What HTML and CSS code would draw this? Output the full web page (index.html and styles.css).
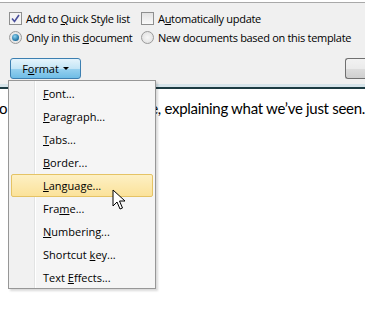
FILE: index.html
```html
<!DOCTYPE html>
<html>
<head>
<meta charset="utf-8">
<link rel="stylesheet" href="styles.css">
</head>
<body>
<div class="screen">
  <div class="dialog">
    <div class="preview"></div>
    <div class="opt-row first">
      <label class="opt col1"><span class="check checked"><svg width="9" height="9" viewBox="0 0 9 9"><path d="M1 4.5 L3.5 7.5 L8 1" fill="none" stroke="#4a4f9c" stroke-width="1.6"/></svg></span><span class="lbl">Add to <u>Q</u>uick Style list</span></label>
      <label class="opt"><span class="check"></span><span class="lbl">A<u>u</u>tomatically update</span></label>
    </div>
    <div class="opt-row">
      <label class="opt col1"><span class="radio on"></span><span class="lbl">Only in this <u>d</u>ocument</span></label>
      <label class="opt"><span class="radio"></span><span class="lbl">New documents based on this template</span></label>
    </div>
    <div class="btn-row">
      <button class="format-btn"><span>F<u>o</u>rmat</span><span class="caret"></span></button>
      <span class="ok-btn"></span>
    </div>
  </div>
  <div class="doc">
    <p class="doc-line"><span class="lead">o</span><span class="rest">e, explaining what we’ve just seen.</span></p>
  </div>
  <ul class="menu">
    <li><u>F</u>ont...</li>
    <li><u>P</u>aragraph...</li>
    <li><u>T</u>abs...</li>
    <li><u>B</u>order...</li>
    <li class="hot"><u>L</u>anguage...</li>
    <li>Fra<u>m</u>e...</li>
    <li><u>N</u>umbering...</li>
    <li>Shortcut <u>k</u>ey...</li>
    <li>Text <u>E</u>ffects...</li>
  </ul>
  <svg class="cursor" width="14" height="22" viewBox="0 0 14 22"><path d="M1 1 L1 17 L5 13 L8 20 L10.5 19 L7.5 12 L13 12 Z" fill="#fff" stroke="#000" stroke-width="1" stroke-linejoin="round"/></svg>
</div>
</body>
</html>
```
FILE: styles.css
```css
* { box-sizing: border-box; }
body { margin: 0; background: #fff; }
.screen {
  position: relative;
  width: 365px;
  height: 316px;
  overflow: hidden;
  font-family: "Open Sans", "Noto Sans", sans-serif;
  font-size: 11px;
  color: #000;
}
u { text-decoration: underline; text-underline-offset: 1px; }
.dialog {
  background: #f0f0f0;
  height: 89px;
  padding: 0 0 0 9px;
  border-bottom: 2px solid #1c3b42;
  box-shadow: inset 0 -3px 0 #d6e4ea;
}
.preview {
  height: 3px;
  margin-left: -9px;
  border-bottom: 1px solid #a9a9a9;
  background: #fff;
}
.opt-row {
  display: flex;
  height: 19px;
  align-items: center;
}
.opt-row.first { margin-top: 6px; }
.opt { display: flex; align-items: center; gap: 4px; white-space: nowrap; letter-spacing: -0.3px; }
.col1 { width: 132px; }
.check {
  flex-shrink: 0;
  width: 13px; height: 13px;
  border: 1px solid #8e8f8f;
  background: linear-gradient(#e2e2e2, #fafafa);
  display: flex; align-items: center; justify-content: center;
}
.check.checked { background: #f4f4f4; }
.radio {
  flex-shrink: 0;
  width: 13px; height: 13px; border-radius: 50%;
  border: 1px solid #9a9a9a;
  background: radial-gradient(circle at 50% 50%, #f7f7f7, #dcdcdc);
  position: relative;
}
.radio.on::after {
  content: ""; position: absolute; left: 2px; top: 2px; width: 7px; height: 7px; border-radius: 50%;
  background: radial-gradient(circle at 40% 35%, #8fd3f0, #1b6fa0 70%, #0c3f66);
}
.btn-row {
  display: flex;
  justify-content: space-between;
  margin-top: 11px;
  padding-left: 1px;
}
.format-btn {
  width: 71px; height: 21px;
  border: 1px solid #3c7fb1;
  border-radius: 3px;
  background: linear-gradient(#e5f4fc 0%, #c4e5f6 50%, #98d1ef 51%, #6fbde6 100%);
  font: inherit;
  padding: 0 0 1px 0;
  display: flex; align-items: center; justify-content: center; gap: 4px;
  color: #000;
  letter-spacing: -0.1px;
}
.caret {
  width: 0; height: 0;
  border-left: 3px solid transparent; border-right: 3px solid transparent;
  border-top: 3px solid #000;
  margin-top: 1px;
}
.ok-btn {
  width: 20px; height: 21px;
  border: 1px solid #707070; border-right: none;
  border-radius: 3px 0 0 3px;
  background: linear-gradient(#f2f2f2 0%, #ebebeb 50%, #dddddd 51%, #cfcfcf 100%);
}
.doc { padding-top: 9px; }
.doc-line {
  margin: 0;
  font-family: "Lato", "Open Sans", sans-serif;
  font-size: 15px;
  line-height: 20px;
  display: flex;
  white-space: nowrap;
  letter-spacing: -0.3px;
}
.lead { width: 155px; margin-left: -1px; }
.menu {
  position: absolute;
  left: 8px; top: 80px;
  width: 148px; height: 209px;
  margin: 0; padding: 1px 2px;
  list-style: none;
  background: linear-gradient(90deg, #f1f1f1 0 25px, #e2e3e3 25px 26px, #ffffff 26px 27px, #f5f5f5 27px);
  border: 1px solid #979797;
  box-shadow: 2px 2px 2px rgba(0,0,0,0.15);
}
.menu li {
  height: 23px;
  line-height: 21px;
  padding-left: 31px;
  white-space: nowrap;
  border: 1px solid transparent;
  border-radius: 2px;
}
.menu li.hot {
  background: linear-gradient(#fdf0c4, #fbe29a);
  border-color: #e5c365;
}
.cursor { position: absolute; left: 112px; top: 189px; }
```
